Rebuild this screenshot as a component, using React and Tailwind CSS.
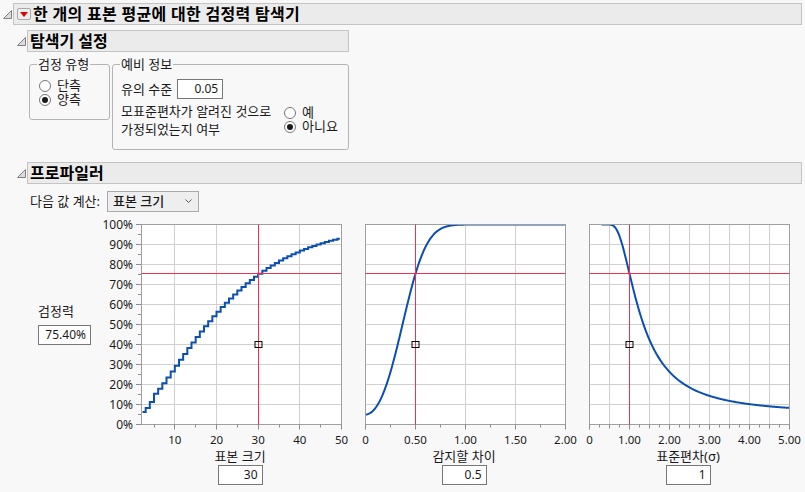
const FONT = '"Noto Sans", "Noto Sans CJK KR", sans-serif';

function phi(x) {
  const t = 1 / (1 + 0.2316419 * Math.abs(x));
  const d = 0.3989423 * Math.exp((-x * x) / 2);
  const p = d * t * (0.3193815 + t * (-0.3565638 + t * (1.781478 + t * (-1.821256 + t * 1.330274))));
  return x > 0 ? 1 - p : p;
}
function power(n, d, s) {
  const v = n - 1;
  const z = 1.959964;
  const z3 = z * z * z;
  const z5 = z3 * z * z;
  const t = z + (z3 + z) / (4 * v) + (5 * z5 + 16 * z3 + 3 * z) / (96 * v * v);
  const delta = (d / s) * Math.sqrt(n);
  const den = Math.sqrt(1 + (t * t) / (2 * v));
  const c = t * (1 - 1 / (4 * v));
  return phi((delta - c) / den) + phi((-delta - c) / den);
}

const W = 200;
const H = 200;
const PAD_T = 4.5;
const PAD_L = 4.5;
const crisp = (v) => Math.floor(v) + 0.5;

function Plot({ id, xMin, xMax, grid, minor, labels, crossX, points }) {
  const sx = (v) => PAD_L + ((v - xMin) / (xMax - xMin)) * W;
  const sy = (p) => PAD_T + H - p * H;
  const d = points.map((pt, i) => `${i ? 'L' : 'M'}${sx(pt[0]).toFixed(2)} ${sy(pt[1]).toFixed(2)}`).join(' ');
  const hs = [];
  for (let i = 1; i < 10; i++) hs.push(i * 10);
  const bottom = PAD_T + H;
  return (
    <svg width={W + 14} height={226} className="block shrink-0 overflow-visible">
      <defs>
        <clipPath id={id}>
          <rect x={PAD_L} y={PAD_T} width={W} height={H} />
        </clipPath>
      </defs>
      <rect x={PAD_L} y={PAD_T} width={W} height={H} fill="#ffffff" />
      {hs.map((p) => (
        <line key={p} x1={PAD_L} x2={PAD_L + W} y1={sy(p / 100)} y2={sy(p / 100)} stroke="#d0d0d0" strokeWidth="1" />
      ))}
      {grid.map((v) => (
        <line key={v} x1={crisp(sx(v))} x2={crisp(sx(v))} y1={PAD_T} y2={bottom} stroke="#d0d0d0" strokeWidth="1" />
      ))}
      <path d={d} fill="none" stroke="#0b4fb3" strokeWidth="2" clipPath={`url(#${id})`} />
      <rect x={PAD_L} y={PAD_T} width={W} height={H} fill="none" stroke="#a0a0a0" strokeWidth="1" />
      {minor.map((v) => (
        <line key={v} x1={crisp(sx(v))} x2={crisp(sx(v))} y1={bottom} y2={bottom + 3} stroke="#8c8c8c" strokeWidth="1" />
      ))}
      {grid.map((v) => (
        <line key={v} x1={crisp(sx(v))} x2={crisp(sx(v))} y1={bottom} y2={bottom + 4} stroke="#8c8c8c" strokeWidth="1" />
      ))}
      {labels.map(([v]) => (
        <line key={v} x1={crisp(sx(v))} x2={crisp(sx(v))} y1={bottom} y2={bottom + 5} stroke="#8c8c8c" strokeWidth="1" />
      ))}
      <line x1={PAD_L} x2={PAD_L + W} y1={crisp(sy(0.754))} y2={crisp(sy(0.754))} stroke="#f0304f" strokeWidth="1" />
      <line x1={crisp(sx(crossX))} x2={crisp(sx(crossX))} y1={PAD_T} y2={bottom} stroke="#f0304f" strokeWidth="1" />
      <rect x={crisp(sx(crossX)) - 3.5} y={crisp(sy(0.4)) - 3} width="7" height="6" fill="none" stroke="#000000" strokeWidth="1" />
      {labels.map(([v, t]) => (
        <text key={t} x={sx(v)} y={bottom + 19} textAnchor="middle" fontSize="11.5" fill="#1a1a1a" fontFamily={FONT}>
          {t}
        </text>
      ))}
    </svg>
  );
}

function YAxis() {
  const vals = [100, 90, 80, 70, 60, 50, 40, 30, 20, 10, 0];
  const minorTicks = [95, 85, 75, 65, 55, 45, 35, 25, 15, 5];
  const y = (v) => 4.5 + 200 - v * 2;
  return (
    <svg width="38" height="226" className="block shrink-0 overflow-visible">
      {vals.map((v) => (
        <g key={v}>
          <text x="34" y={y(v) + 4.5} textAnchor="end" fontSize="12" fill="#1a1a1a" fontFamily={FONT}>
            {v}%
          </text>
          <line x1="37" x2="42" y1={y(v)} y2={y(v)} stroke="#8c8c8c" />
        </g>
      ))}
      {minorTicks.map((v) => (
        <line key={v} x1="39" x2="42" y1={y(v)} y2={y(v)} stroke="#8c8c8c" />
      ))}
    </svg>
  );
}

function Tri() {
  return (
    <svg width="9" height="9" viewBox="0 0 9 9" className="block shrink-0">
      <path d="M0.5 8.5 L8.5 0.5 L8.5 8.5 Z" fill="#dcdcdc" stroke="#808080" strokeWidth="1" />
    </svg>
  );
}

function Radio({ on, label }) {
  return (
    <div className="flex h-[14px] items-center gap-[6px]">
      <span className="flex h-3 w-3 shrink-0 items-center justify-center rounded-full border border-[#777777] bg-white">
        {on && <span className="h-[6px] w-[6px] rounded-full bg-[#1a1a1a]" />}
      </span>
      <span className="mt-[-2px] leading-[14px]">{label}</span>
    </div>
  );
}

function Group({ title, className, children }) {
  return (
    <div className={`relative rounded-[3px] border border-[#b4b4b4] ${className}`}>
      <span className="absolute left-[7px] top-[-10px] bg-[#f8f8f8] px-[1px] leading-[18px] text-[#1a1a1a]">{title}</span>
      {children}
    </div>
  );
}

function Value({ children, w = 'w-[45px]' }) {
  return (
    <div className={`flex h-[20px] ${w} items-center justify-end border border-[#777777] bg-white pr-[4px] text-[12px] leading-none text-[#1a1a1a]`}>
      {children}
    </div>
  );
}

function Header({ children, className }) {
  return (
    <div className={`flex h-[22px] items-center border border-[#c4c4c4] bg-[#ebebeb] text-[16px] font-bold leading-none text-black ${className}`}>
      {children}
    </div>
  );
}

function Column({ label, value, plot, className }) {
  return (
    <div className={`flex w-[214px] flex-col items-start ${className}`}>
      {plot}
      <div className="ml-[3px] flex w-[200px] flex-col items-center">
        <div className="mt-[1px] h-[18px] leading-[18px] text-[#1a1a1a]">{label}</div>
        <Value>{value}</Value>
      </div>
    </div>
  );
}

const range = (a, b, n) => Array.from({ length: n + 1 }, (_, i) => a + ((b - a) * i) / n);

function stepped() {
  const fixed = { 2: 0.062, 3: 0.083, 4: 0.113 };
  const out = [];
  for (let n = 2; n <= 49; n++) {
    const p = fixed[n] ?? power(n, 0.5, 1);
    out.push([n === 2 ? 2.25 : n, p]);
    out.push([n === 49 ? 49.6 : n + 1, p]);
  }
  return out;
}

export default function App() {
  const p1 = stepped();
  const p2 = range(0, 2, 200).map((d) => [d, power(30, d, 1)]);
  const p3 = range(0.3, 5, 300).map((s) => [s, power(30, 0.5, s)]);
  return (
    <div className="h-[492px] w-[805px] overflow-hidden bg-[#f8f8f8] text-[13px] text-[#1a1a1a]" style={{ fontFamily: FONT }}>
      <div className="flex items-center gap-[1px] pl-[3px] pt-[3px]">
        <Tri />
        <Header className="w-[789px] pl-[3px] tracking-[0.3px]">
          <span className="mr-[2px] flex h-[12px] w-[14px] items-center justify-center rounded-[2px] border border-[#aaaaaa] bg-[#eeeeee]">
            <svg width="8" height="5" viewBox="0 0 8 5">
              <path d="M0 0 L8 0 L4 5 Z" fill="#e00000" />
            </svg>
          </span>
          한 개의 표본 평균에 대한 검정력 탐색기
        </Header>
      </div>

      <div className="flex items-center gap-[1px] pl-[17px] pt-[5px]">
        <Tri />
        <Header className="w-[322px] pl-[2px]">탐색기 설정</Header>
      </div>

      <div className="ml-[29px] mt-[12px] flex gap-[2px]">
        <Group title="검정 유형" className="h-[56px] w-[81px]">
          <div className="flex flex-col pl-[9px] pt-[14px]">
            <Radio label="단측" />
            <Radio on label="양측" />
          </div>
        </Group>
        <Group title="예비 정보" className="h-[86px] w-[237px]">
          <div className="flex items-center gap-[5px] pl-[8px] pt-[14px]">
            <span className="leading-[18px]">유의 수준</span>
            <Value w="w-[46px]">0.05</Value>
          </div>
          <div className="mt-[3px] flex items-center pl-[8px]">
            <div className="w-[163px] whitespace-nowrap leading-[18px]">
              모표준편차가 알려진 것으로
              <br />
              가정되었는지 여부
            </div>
            <div className="flex flex-col">
              <Radio label="예" />
              <Radio on label="아니요" />
            </div>
          </div>
        </Group>
      </div>

      <div className="flex items-center gap-[1px] pl-[17px] pt-[12px]">
        <Tri />
        <Header className="w-[775px] pl-[2px]">프로파일러</Header>
      </div>

      <div className="ml-[30px] mt-[7px] flex items-center">
        <span className="w-[77px]">다음 값 계산:</span>
        <div className="flex h-[21px] w-[92px] items-center justify-between border border-[#aaaaaa] bg-[#eeeeee] pl-[5px] pr-[6px] font-medium">
          <span>표본 크기</span>
          <svg width="7" height="5" viewBox="0 0 7 5">
            <path d="M0.5 0.5 L3.5 3.5 L6.5 0.5" fill="none" stroke="#555555" strokeWidth="1" />
          </svg>
        </div>
      </div>

      <div className="mt-[8px] flex items-start">
        <div className="flex w-[99px] shrink-0 flex-col items-start pl-[38px] pt-[82px]">
          <div className="leading-[18px]">검정력</div>
          <div className="mt-[5px]">
            <Value w="w-[53px]">75.40%</Value>
          </div>
        </div>
        <YAxis />
        <Column
          label="표본 크기"
          value="30"
          plot={
            <Plot
              id="c1"
              xMin={2}
              xMax={50}
              grid={[10, 20, 30, 40]}
              minor={[5, 15, 25, 35, 45]}
              labels={[[10, '10'], [20, '20'], [30, '30'], [40, '40'], [50, '50']]}
              crossX={30}
              points={p1}
            />
          }
        />
        <Column
          className="ml-[10px]"
          label="감지할 차이"
          value="0.5"
          plot={
            <Plot
              id="c2"
              xMin={0}
              xMax={2}
              grid={[0.5, 1, 1.5]}
              minor={[0.25, 0.75, 1.25, 1.75]}
              labels={[[0, '0'], [0.5, '0.50'], [1, '1.00'], [1.5, '1.50'], [2, '2.00']]}
              crossX={0.5}
              points={p2}
            />
          }
        />
        <Column
          className="ml-[10px]"
          label="표준편차(σ)"
          value="1"
          plot={
            <Plot
              id="c3"
              xMin={0}
              xMax={5}
              grid={[0.5, 1, 1.5, 2, 2.5, 3, 3.5, 4, 4.5]}
              minor={[0.25, 0.75, 1.25, 1.75, 2.25, 2.75, 3.25, 3.75, 4.25, 4.75]}
              labels={[[0, '0'], [1, '1.00'], [2, '2.00'], [3, '3.00'], [4, '4.00'], [5, '5.00']]}
              crossX={1}
              points={p3}
            />
          }
        />
      </div>
    </div>
  );
}
